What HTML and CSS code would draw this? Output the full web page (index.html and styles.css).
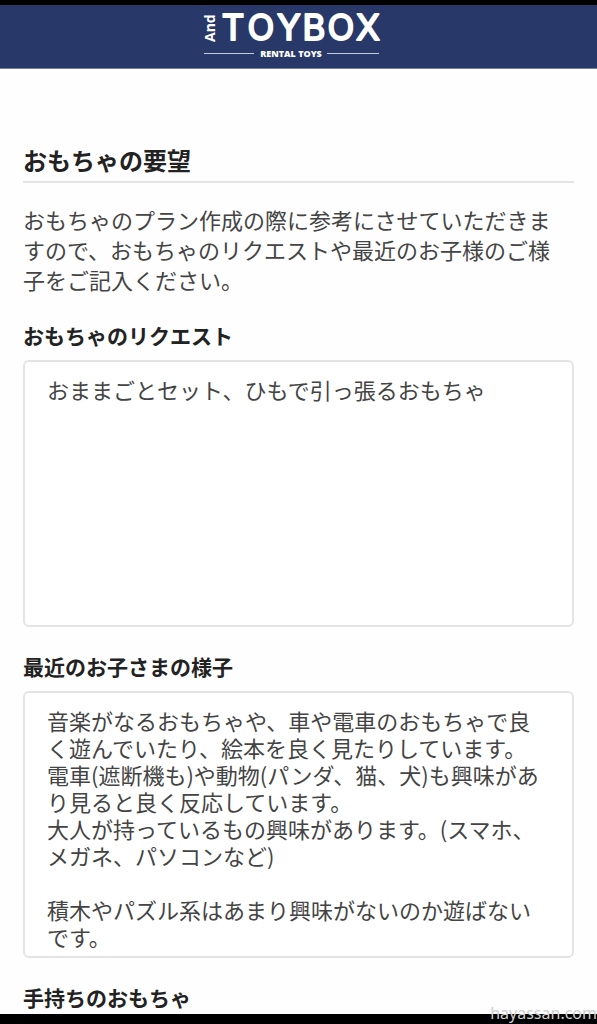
FILE: index.html
```html
<!DOCTYPE html>
<html lang="ja">
<head>
    <meta charset="UTF-8">
    <meta name="viewport" content="width=device-width, initial-scale=1.0">
    <title>おもちゃの要望 | And TOYBOX</title>
    <link rel="stylesheet" href="styles.css">
</head>
<body>
    <header class="header">
        <svg class="logo" width="178" height="50" viewBox="0 0 178 50" role="img" aria-label="And TOYBOX RENTAL TOYS">
            <text class="logo-and" transform="translate(12 32) rotate(-90)">And</text>
            <text class="logo-name" x="30 58 86 111 138 165" y="30">TOYBOX</text>
            <path class="logo-line" d="M1 43.5h50M124 43.5h52" />
            <text class="logo-sub" x="88" y="47">RENTAL TOYS</text>
        </svg>
    </header>

    <main class="content">
        <h1>おもちゃの要望</h1>
        <p class="lead">おもちゃのプラン作成の際に参考にさせていただきますので、おもちゃのリクエストや最近のお子様のご様子をご記入ください。</p>

        <form class="form">
            <label for="request">おもちゃのリクエスト</label>
            <textarea id="request" name="request">おままごとセット、ひもで引っ張るおもちゃ</textarea>

            <label for="condition">最近のお子さまの様子</label>
            <textarea id="condition" name="condition">音楽がなるおもちゃや、車や電車のおもちゃで良く遊んでいたり、絵本を良く見たりしています。
電車(遮断機も)や動物(パンダ、猫、犬)も興味があり見ると良く反応しています。
大人が持っているもの興味があります。(スマホ、メガネ、パソコンなど)

積木やパズル系はあまり興味がないのか遊ばないです。</textarea>

            <div class="form-label">手持ちのおもちゃ</div>
        </form>
    </main>

    <footer class="bottom-bar">
        <span class="site-name">hayassan.com</span>
    </footer>
</body>
</html>
```

FILE: styles.css
```css
* {
    margin: 0;
    padding: 0;
    box-sizing: border-box;
}

body {
    display: flex;
    flex-direction: column;
    min-height: 100vh;
    font-family: "Noto Sans CJK JP", sans-serif;
    font-size: 22px;
    line-height: 30px;
    color: #444;
    background-color: #fefefe;
}

/* ヘッダー */
.header {
    display: flex;
    justify-content: center;
    padding: 5px 0 8px;
    border-top: 5px solid #000;
    border-bottom: 1px solid #77809f;
    background-color: #273869;
    color: #fff;
}

.logo {
    display: block;
    margin-right: 14px;
    fill: #fff;
    overflow: visible;
}

.logo-and {
    font-family: "Open Sans", sans-serif;
    font-size: 14px;
    font-weight: 700;
}

.logo-name {
    font-family: Inter, sans-serif;
    font-size: 35px;
    font-weight: 400;
    text-anchor: middle;
    stroke: #fff;
    stroke-width: 2px;
    stroke-linejoin: round;
}

.logo-line {
    stroke: #c5cbdc;
}

.logo-sub {
    font-family: "Open Sans", sans-serif;
    font-size: 9px;
    font-weight: 800;
    text-anchor: middle;
}

/* 本文 */
.content {
    flex: 1;
    padding: 73px 23px 0;
}

h1 {
    padding-bottom: 3px;
    border-bottom: 2px solid #e4e4e4;
    font-size: 24px;
    line-height: 36px;
    color: #222;
}

.lead {
    margin: 21px 0 26px;
    padding-right: 16px;
}

/* フォーム */
label,
.form-label {
    display: block;
    margin-bottom: 10px;
    font-size: 21px;
    font-weight: 700;
    line-height: 30px;
    color: #222;
}

textarea {
    display: block;
    width: 100%;
    height: 267px;
    margin-bottom: 24px;
    padding: 14px 22px 0;
    border: 2px solid #e4e4e4;
    border-radius: 6px;
    background-color: #fff;
    font-family: inherit;
    font-size: 22px;
    line-height: 27px;
    color: #444;
    resize: none;
    overflow: hidden;
}

.form-label {
    margin-bottom: 0;
}

/* 下のバー */
.bottom-bar {
    position: relative;
    height: 10px;
    background-color: #000;
}

.site-name {
    position: absolute;
    right: 0;
    bottom: 1px;
    font-family: "Noto Sans", sans-serif;
    font-size: 16px;
    line-height: 20px;
    color: #d0d0d0;
}
```
